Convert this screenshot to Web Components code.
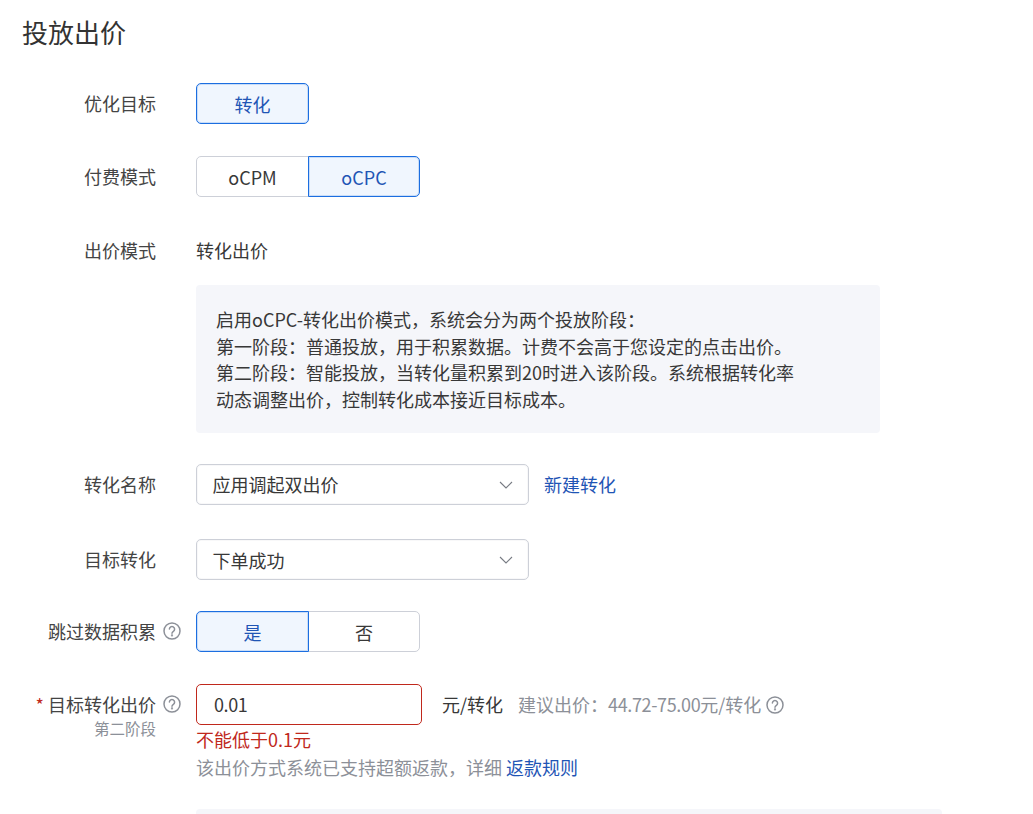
<!DOCTYPE html>
<html lang="zh-CN"><head><meta charset="utf-8"><title>投放出价</title>
<style>
html,body{margin:0;padding:0;height:814px;overflow:hidden;background:#fff}
body{font-family:"Noto Sans CJK SC","Noto Sans",sans-serif;font-size:18px;color:#383838}
</style></head><body>
<bid-form>
  <section-title>投放出价</section-title>
  <form-row label="优化目标" style="margin-top:31px"><seg-group options="转化" active="0" single></seg-group></form-row>
  <form-row label="付费模式" style="margin-top:32px"><seg-group options="oCPM,oCPC" active="1"></seg-group></form-row>
  <form-row label="出价模式" style="margin-top:33px"><span style="padding-bottom:2px">转化出价</span></form-row>
  <form-row style="margin-top:14px"><note-box>
    <div>启用oCPC-转化出价模式，系统会分为两个投放阶段：</div>
    <div>第一阶段：普通投放，用于积累数据。计费不会高于您设定的点击出价。</div>
    <div>第二阶段：智能投放，当转化量积累到20时进入该阶段。系统根据转化率</div>
    <div>动态调整出价，控制转化成本接近目标成本。</div>
  </note-box></form-row>
  <form-row label="转化名称" style="margin-top:31px"><select-box style="--shift:2px">应用调起双出价</select-box><link-text style="margin-left:15px;padding-bottom:2px">新建转化</link-text></form-row>
  <form-row label="目标转化" style="margin-top:34px"><select-box>下单成功</select-box></form-row>
  <form-row label="跳过数据积累" help style="margin-top:31px"><seg-group options="是,否" active="0"></seg-group></form-row>
  <form-row label="目标转化出价" help required sub="第二阶段" style="margin-top:32px">
    <bid-field value="0.01" error="不能低于0.1元">
      <span slot="after">元/转化</span>
      <span slot="advice">建议出价：<span style="letter-spacing:-.36px">44.72-75.00</span>元/转化</span>
      <span slot="hint">该出价方式系统已支持超额返款，详细 <link-text>返款规则</link-text></span>
    </bid-field>
  </form-row>
  <form-row flush style="margin-top:28px"><bottom-panel></bottom-panel></form-row>
</bid-form>
<script>
const HELP='<svg width="18" height="18" viewBox="0 0 18 18" fill="none" stroke="#8c9098" stroke-width="1.5" aria-hidden="true"><circle cx="9" cy="9" r="8"/><path d="M6.4 7.1a2.6 2.6 0 1 1 4 2.2c-.9.6-1.4 1-1.4 2" stroke-linecap="round"/><circle cx="9" cy="13.4" r=".4" fill="#8c9098"/></svg>';
function def(name,html,init){
  customElements.define(name,class extends HTMLElement{
    constructor(){super();this.attachShadow({mode:'open'}).innerHTML=html}
    connectedCallback(){if(init)init(this,this.shadowRoot)}
  });
}
def('bid-form','<style>:host{display:block;padding-top:12px}</style><slot></slot>');
def('section-title','<style>:host{display:block;margin-left:22px;font-size:26px;line-height:40px;color:#333}</style><slot></slot>');
def('form-row',`<style>
:host{display:grid;grid-template-columns:196px 1fr;align-items:start}
:host([flush]) .label{height:0;padding:0}
:host([flush]) .ctl{min-height:0}
.label{box-sizing:border-box;position:relative;display:flex;justify-content:flex-end;align-items:center;height:41px;padding:0 40px 2px 0;white-space:nowrap;color:#444}
.label.help{padding-right:15px}
.req{color:#c0281c;font-size:18px;margin:0 4px 0 0;line-height:1}
.help-i{display:flex;margin-left:7px}
.sub{position:absolute;right:40px;top:34px;font-size:15.5px;line-height:20px;color:#8c9098}
.ctl{display:flex;align-items:center;min-height:41px;min-width:0}
</style><div class="label"></div><div class="ctl"><slot></slot></div>`,(h,s)=>{
  const l=s.querySelector('.label');
  const t=h.getAttribute('label')||'';
  l.innerHTML='';
  if(h.hasAttribute('required')){const r=document.createElement('span');r.className='req';r.textContent='*';l.append(r)}
  const sp=document.createElement('span');sp.textContent=t;l.append(sp);
  if(h.hasAttribute('help')){l.classList.add('help');const i=document.createElement('span');i.className='help-i';i.innerHTML=HELP;l.append(i)}
  if(h.getAttribute('sub')){const d=document.createElement('div');d.className='sub';d.textContent=h.getAttribute('sub');l.append(d)}
});
def('seg-group',`<style>
:host{display:inline-flex;height:41px}
.b{box-sizing:border-box;width:112px;height:41px;display:flex;align-items:center;justify-content:center;border:1px solid #cdd0d8;background:#fff;margin-left:-1px}
.b:first-child{margin-left:0;width:113px;border-radius:5px 0 0 5px}
.b:last-child{border-radius:0 5px 5px 0}
.b:only-child{border-radius:5px;width:113px}
.b.on{border-color:#1c6ee0;background:#f0f6fe;color:#1f55b5;position:relative;box-shadow:inset 0 0 0 1px rgba(28,110,224,.18)}
</style><div id="w" style="display:contents"></div>`,(h,s)=>{
  const w=s.getElementById('w');w.innerHTML='';
  h.getAttribute('options').split(',').forEach((o,i)=>{const d=document.createElement('div');d.className='b'+(i==h.getAttribute('active')?' on':'');d.textContent=o;w.append(d)});
});
def('note-box',`<style>:host{display:block;box-sizing:border-box;width:684px;height:148px;background:#f5f6fa;border-radius:4px;padding:21px 20px;font-size:18px;line-height:26.6px}</style><slot></slot>`);
def('select-box',`<style>
:host{box-sizing:border-box;width:333px;height:41px;display:flex;align-items:center;justify-content:space-between;border:1px solid #cdd0d8;border-radius:5px;padding:0 15px 0 15.5px;background:#fff;box-shadow:inset 0 0 0 1px rgba(205,208,216,.15)}
.t{padding-bottom:var(--shift,0)}
svg{flex:none}
</style><span class="t"><slot></slot></span><svg width="14" height="8" viewBox="0 0 14 8" fill="none" stroke="#777b83" stroke-width="1.1"><path d="M1 1l6 6 6-6"/></svg>`);
def('link-text','<style>:host{display:inline;color:#1f55b5;white-space:nowrap}</style><slot></slot>');
def('bid-field',`<style>
:host{display:block;flex:1}
.top{display:flex;align-items:center;height:41px}
.input{box-sizing:border-box;width:226px;height:41px;border:1px solid #c0281c;border-radius:5px;padding:0 17px 2px;display:flex;align-items:center;letter-spacing:-.4px}
.after{margin-left:20px;padding-bottom:2px}
.advice{margin-left:15px;color:#8c9098;display:flex;align-items:center;gap:5px}
.advice ::slotted(span){padding-bottom:2px}
.err{color:#c0281c;line-height:28px}
.hint{color:#8c9098;line-height:28px}
svg{display:block}
</style><div class="top"><div class="input"></div><span class="after"><slot name="after"></slot></span><span class="advice"><slot name="advice"></slot>${HELP}</span></div><div class="err"></div><div class="hint"><slot name="hint"></slot></div>`,(h,s)=>{
  s.querySelector('.input').textContent=h.getAttribute('value');
  s.querySelector('.err').textContent=h.getAttribute('error');
});
def('bottom-panel','<style>:host{display:block;width:746px;height:5px;background:#f5f6fa;border-radius:4px 4px 0 0}</style>');
</script>
</body></html>
